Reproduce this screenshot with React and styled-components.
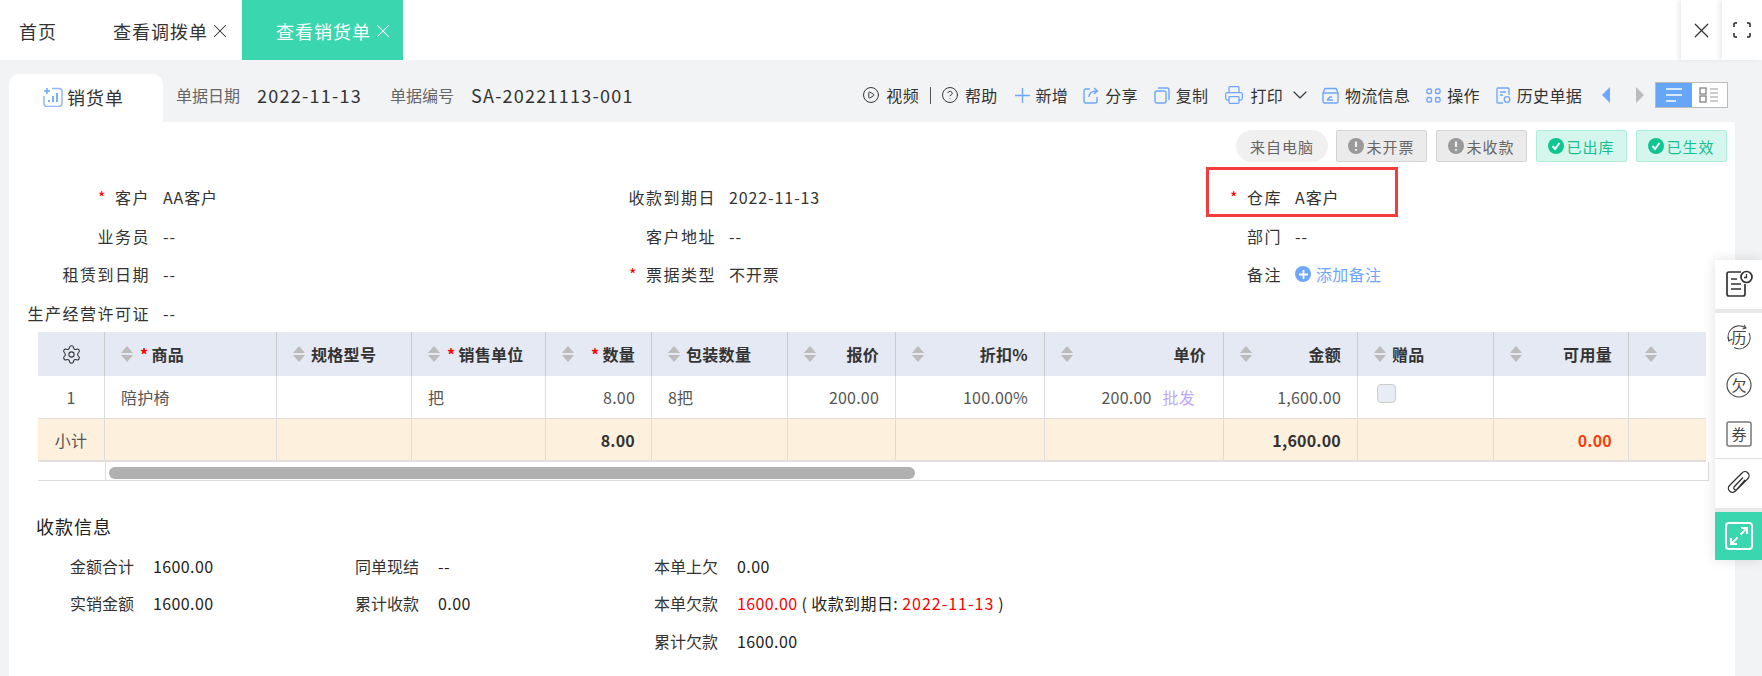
import React from "react";
import styled, { createGlobalStyle } from "styled-components";
import { CirclePlay, CircleHelp, ChevronDown, Printer, Settings, X } from "lucide-react";

const BLUE = "#6ea6fb";
const COLUMNS = "67px 172px 135px 134px 106px 136px 108px 149px 179px 134px 136px 135px 77px";

const headers = [
  { label: "商品", required: true },
  { label: "规格型号" },
  { label: "销售单位", required: true },
  { label: "数量", required: true, right: true },
  { label: "包装数量" },
  { label: "报价", right: true },
  { label: "折扣%", right: true },
  { label: "单价", right: true, inset: 17 },
  { label: "金额", right: true },
  { label: "赠品" },
  { label: "可用量", right: true },
  { label: "" },
];

const formRows = [
  [
    { label: "客户", value: "AA客户", required: true },
    { label: "收款到期日", value: "2022-11-13" },
    { label: "仓库", value: "A客户", required: true },
  ],
  [
    { label: "业务员", value: "--" },
    { label: "客户地址", value: "--" },
    { label: "部门", value: "--" },
  ],
  [
    { label: "租赁到日期", value: "--" },
    { label: "票据类型", value: "不开票", required: true },
    { label: "备注", add: true },
  ],
  [{ label: "生产经营许可证", value: "--" }],
];

const SortArrows = () => (
  <SortSvg viewBox="0 0 12 16">
    <polygon points="6,0 12,7 0,7" />
    <polygon points="0,9 12,9 6,16" />
  </SortSvg>
);

const SalesIcon = () => (
  <svg width="20" height="20" viewBox="0 0 20 20" fill="none" stroke="#93b6ff" strokeWidth="1.5">
    <path d="M9 1.5h7a3 3 0 0 1 3 3v12a3 3 0 0 1-3 3H4a3 3 0 0 1-3-3V9" />
    <path d="M4 1v6M1 4h6" stroke="#6ea6fb" />
    <path d="M6 15v-2M10 15V9M14 15V6" stroke="#6ea6fb" strokeWidth="1.8" />
  </svg>
);

const PlusIcon = ({ size = 15, color = BLUE, width = 1.4 }) => (
  <svg width={size} height={size} viewBox="0 0 15 15" fill="none" stroke={color} strokeWidth={width}>
    <path d="M7.500 0v15M0 7.500h15" />
  </svg>
);

const ShareIcon = () => (
  <svg width="16" height="17" viewBox="0 0 16 17" fill="none" stroke={BLUE} strokeWidth="1.4">
    <path d="M7 2H3a2 2 0 0 0-2 2v10a2 2 0 0 0 2 2h9a2 2 0 0 0 2-2v-4" />
    <path d="M6 10c0-4 3-6 8-6M11 1l3.500 3L11 7" />
  </svg>
);

const CopyIcon = () => (
  <svg width="16" height="17" viewBox="0 0 16 17" fill="none" stroke={BLUE} strokeWidth="1.4">
    <rect x="1" y="4" width="11" height="12" rx="2" />
    <path d="M4 1h9a2 2 0 0 1 2 2v10" />
  </svg>
);

const LogisticsIcon = () => (
  <svg width="17" height="17" viewBox="0 0 17 17" fill="none" stroke={BLUE} strokeWidth="1.4">
    <path d="M1 6l2-4.500h11L16 6v8.500a1.500 1.500 0 0 1-1.500 1.500h-12A1.500 1.500 0 0 1 1 14.500z" />
    <path d="M1 6h15M5 13l3-3h2M5 13h6" />
  </svg>
);

const OperateIcon = () => (
  <svg width="15" height="15" viewBox="0 0 15 15" fill="none" stroke={BLUE} strokeWidth="1.4">
    <rect x="1" y="1" width="4.500" height="4.500" rx="1.500" />
    <rect x="9.500" y="1" width="4.500" height="4.500" rx="1.500" />
    <rect x="1" y="9.500" width="4.500" height="4.500" rx="1.500" />
    <rect x="9.500" y="9.500" width="4.500" height="4.500" rx="1.500" />
  </svg>
);

const HistoryIcon = () => (
  <svg width="15" height="17" viewBox="0 0 15 17" fill="none" stroke={BLUE} strokeWidth="1.3">
    <path d="M7 16H2a1 1 0 0 1-1-1V2a1 1 0 0 1 1-1h10a1 1 0 0 1 1 1v6" />
    <path d="M4 5h6M4 8h3" />
    <circle cx="11" cy="12.500" r="2.800" />
  </svg>
);

const ListIcon = () => (
  <svg width="20" height="16" viewBox="0 0 20 16" fill="none" stroke="#fff" strokeWidth="1.6">
    <path d="M2 2h16M2 8h16M2 14h10" />
  </svg>
);

const CardsIcon = () => (
  <svg width="20" height="16" viewBox="0 0 20 16" fill="none" stroke="#777" strokeWidth="1.2">
    <rect x="1" y="1" width="6" height="6" />
    <rect x="1" y="9" width="6" height="6" />
    <path d="M11 2h8M11 6h8M11 10h8M11 14h8" stroke="#999" />
  </svg>
);

const WarnDot = () => (
  <svg width="16" height="16" viewBox="0 0 16 16">
    <circle cx="8" cy="8" r="8" fill="#999" />
    <path d="M8 3.500v5.500M8 11v1.800" stroke="#eee" strokeWidth="2.200" />
  </svg>
);

const CheckDot = () => (
  <svg width="16" height="16" viewBox="0 0 16 16">
    <circle cx="8" cy="8" r="8" fill="#10c690" />
    <path d="M4.500 8l2.500 3 4.500-6" fill="none" stroke="#fff" strokeWidth="2" />
  </svg>
);

const FullscreenIcon = () => (
  <svg width="18" height="16" viewBox="0 0 18 16" fill="none" stroke="#222" strokeWidth="1.500">
    <path d="M1 5V2a1 1 0 0 1 1-1h2M14 1h2a1 1 0 0 1 1 1v3M17 11v3a1 1 0 0 1-1 1h-2M4 15H2a1 1 0 0 1-1-1v-3" />
  </svg>
);

const NoteClockIcon = () => (
  <svg width="28" height="28" viewBox="0 0 28 28" fill="none" stroke="#333" strokeWidth="1.700">
    <path d="M16 2H4a2 2 0 0 0-2 2v20a2 2 0 0 0 2 2h14a2 2 0 0 0 2-2V14" />
    <path d="M6 9h6M6 14h10M6 19h10" />
    <circle cx="21.500" cy="7" r="5.500" />
    <path d="M21.500 4v3.500h-2.500" strokeWidth="1.300" />
  </svg>
);

const RoundGlyph = ({ children, arcs }) => (
  <svg width="26" height="26" viewBox="0 0 26 26" fill="none" stroke="#444" strokeWidth="1.100">
    {arcs ? (
      <>
        <path d="M3 17A11 11 0 0 1 19 3.500M23 9A11 11 0 0 1 8 23.500" />
        <path d="M2 13l1 4 3.500-2M18 1l2 3-3.500 1" />
      </>
    ) : (
      <circle cx="13" cy="13" r="12" />
    )}
    <GlyphText x="13" y="18.500">{children}</GlyphText>
  </svg>
);

const CouponIcon = () => (
  <svg width="26" height="26" viewBox="0 0 26 26" fill="none" stroke="#777" strokeWidth="1.500">
    <rect x="1" y="1" width="24" height="24" rx="2" />
    <GlyphText x="13" y="18.500">券</GlyphText>
  </svg>
);

const ClipIcon = () => (
  <svg width="26" height="26" viewBox="0 0 26 26" fill="none" stroke="#333" strokeWidth="1.300">
    <path d="M19 10L9.500 21a4 4 0 0 1-6-5.500L16 3a4 4 0 0 1 6 5.500L11 19.500a2 2 0 0 1-3-2.500l9-9.500" />
  </svg>
);

const ExpandIcon = () => (
  <svg width="28" height="28" viewBox="0 0 28 28" fill="none" stroke="#fff" strokeWidth="2">
    <rect x="1" y="1" width="26" height="26" rx="3" />
    <path d="M15.500 12.500L22 6M16 6h6v6M12.500 15.500L6 22M6 16v6h6" />
  </svg>
);

export default function App() {
  return (
    <Page>
      <GlobalStyle />
      <TabBar>
        <HomeTab>首页</HomeTab>
        <Tab>
          查看调拨单
          <X size={22} strokeWidth={1.1} />
        </Tab>
        <Tab $active>
          查看销货单
          <X size={22} strokeWidth={1.1} />
        </Tab>
        <WindowButton>
          <X size={25} strokeWidth={1.2} />
        </WindowButton>
        <WindowButton>
          <FullscreenIcon />
        </WindowButton>
      </TabBar>

      <Body>
        <SubHeader>
          <SheetTab>
            <SalesIcon />
            销货单
          </SheetTab>
          <MetaLabel>单据日期</MetaLabel>
          <MetaValue>2022-11-13</MetaValue>
          <MetaLabel>单据编号</MetaLabel>
          <MetaValue>SA-20221113-001</MetaValue>

          <Toolbar>
            <ToolItem $gap={14}>
              <CirclePlay size={18} strokeWidth={1.3} color="#333" />
              视频
            </ToolItem>
            <ToolDivider />
            <ToolItem $gap={17}>
              <CircleHelp size={18} strokeWidth={1.3} color="#333" />
              帮助
            </ToolItem>
            <ToolItem $gap={15}>
              <PlusIcon />
              新增
            </ToolItem>
            <ToolItem>
              <ShareIcon />
              分享
            </ToolItem>
            <ToolItem>
              <CopyIcon />
              复制
            </ToolItem>
            <ToolItem $gap={10}>
              <Printer size={20} strokeWidth={1.5} color={BLUE} />
              打印
              <PrintChevron size={24} strokeWidth={1.1} color="#333" />
            </ToolItem>
            <ToolItem>
              <LogisticsIcon />
              物流信息
            </ToolItem>
            <ToolItem>
              <OperateIcon />
              操作
            </ToolItem>
            <ToolItem $gap={20}>
              <HistoryIcon />
              历史单据
            </ToolItem>
            <ArrowButton $dir="left" />
            <ArrowButton $dir="right" />
            <ViewToggle>
              <ToggleHalf $active>
                <ListIcon />
              </ToggleHalf>
              <ToggleHalf>
                <CardsIcon />
              </ToggleHalf>
            </ViewToggle>
          </Toolbar>
        </SubHeader>

        <Sheet>
          <TagRow>
            <PillTag>来自电脑</PillTag>
            <Tag>
              <WarnDot />
              未开票
            </Tag>
            <Tag>
              <WarnDot />
              未收款
            </Tag>
            <Tag $green>
              <CheckDot />
              已出库
            </Tag>
            <Tag $green>
              <CheckDot />
              已生效
            </Tag>
          </TagRow>

          <FormGrid>
            {formRows.flat().map((field) => (
              <Field key={field.label}>
                <FieldLabel>
                  {field.required && <Star>*</Star>}
                  {field.label}
                </FieldLabel>
                {field.add ? (
                  <AddNote>
                    <AddDot>
                      <PlusIcon size={9} color="#fff" width={3} />
                    </AddDot>
                    添加备注
                  </AddNote>
                ) : (
                  <FieldValue>{field.value}</FieldValue>
                )}
              </Field>
            ))}
          </FormGrid>

          <Table>
            <HeadRow>
              <HeadCell $center>
                <Settings size={21} strokeWidth={1.2} color="#333" />
              </HeadCell>
              {headers.map((h, i) => (
                <HeadCell key={i} $inset={h.inset}>
                  <SortArrows />
                  <HeadLabel $right={h.right}>
                    {h.required && <HeadStar>*</HeadStar>}
                    {h.label}
                  </HeadLabel>
                </HeadCell>
              ))}
            </HeadRow>
            <DataRow>
              <Cell $center>1</Cell>
              <Cell>陪护椅</Cell>
              <Cell />
              <Cell>把</Cell>
              <Cell $right>8.00</Cell>
              <Cell>8把</Cell>
              <Cell $right>200.00</Cell>
              <Cell $right>100.00%</Cell>
              <Cell $right $inset={28}>
                200.00<PriceTag>批发</PriceTag>
              </Cell>
              <Cell $right>1,600.00</Cell>
              <Cell>
                <GiftBox />
              </Cell>
              <Cell />
              <Cell />
            </DataRow>
            <SumRow>
              <Cell $center>小计</Cell>
              <Cell />
              <Cell />
              <Cell />
              <Cell $right $bold>8.00</Cell>
              <Cell />
              <Cell />
              <Cell />
              <Cell />
              <Cell $right $bold>1,600.00</Cell>
              <Cell />
              <Cell $right $bold $red>0.00</Cell>
              <Cell />
            </SumRow>
            <ScrollRow>
              <ScrollTrack>
                <ScrollThumb />
              </ScrollTrack>
            </ScrollRow>
          </Table>

          <SectionTitle>收款信息</SectionTitle>
          <PayGrid>
            <PayColumn $width={285}>
              <PayLine><PayLabel>金额合计</PayLabel>1600.00</PayLine>
              <PayLine><PayLabel>实销金额</PayLabel>1600.00</PayLine>
            </PayColumn>
            <PayColumn $width={299}>
              <PayLine><PayLabel>同单现结</PayLabel>--</PayLine>
              <PayLine><PayLabel>累计收款</PayLabel>0.00</PayLine>
            </PayColumn>
            <PayColumn>
              <PayLine><PayLabel>本单上欠</PayLabel>0.00</PayLine>
              <PayLine>
                <PayLabel>本单欠款</PayLabel>
                <Due>1600.00</Due>&nbsp;( 收款到期日:&nbsp;<DueDate>2022-11-13</DueDate>&nbsp;)
              </PayLine>
              <PayLine><PayLabel>累计欠款</PayLabel>1600.00</PayLine>
            </PayColumn>
          </PayGrid>
        </Sheet>
      </Body>

      <Annotation />

      <SidePanel>
        <SideCard>
          <SideItem><NoteClockIcon /></SideItem>
        </SideCard>
        <SideCard>
          <SideItem><RoundGlyph arcs>历</RoundGlyph></SideItem>
          <SideItem><RoundGlyph>欠</RoundGlyph></SideItem>
          <SideItem><CouponIcon /></SideItem>
          <SideDivider />
          <SideItem><ClipIcon /></SideItem>
        </SideCard>
        <SideCard $green>
          <SideItem><ExpandIcon /></SideItem>
        </SideCard>
      </SidePanel>
    </Page>
  );
}

const GlobalStyle = createGlobalStyle`
  html, body {
    margin: 0;
    padding: 0;
    background: #fff;
  }
  * {
    box-sizing: border-box;
  }
  body {
    font-family: "Noto Sans CJK SC", "Open Sans", sans-serif;
    font-size: 16px;
    color: #333;
  }
`;

const Page = styled.div`
  position: relative;
  width: 1762px;
  height: 676px;
  overflow: hidden;
`;

const TabBar = styled.div`
  display: flex;
  align-items: stretch;
  height: 60px;
  background: #fff;
`;

const HomeTab = styled.div`
  display: flex;
  align-items: center;
  width: 79px;
  padding: 2px 0 0 19px;
  font-size: 18px;
  letter-spacing: 1px;
`;

const Tab = styled.div`
  display: flex;
  align-items: center;
  gap: 1px;
  width: 161px;
  margin-right: 2px;
  padding: 2px 0 0 34px;
  font-size: 18px;
  letter-spacing: 1px;
  color: ${(p) => (p.$active ? "#fff" : "#333")};
  background: ${(p) => (p.$active ? "#3ad6b0" : "transparent")};
`;

const WindowButton = styled.div`
  display: flex;
  align-items: center;
  justify-content: center;
  width: 40px;
  box-shadow: -3px 0 4px rgba(0, 0, 0, 0.07);
  &:nth-last-child(2) {
    margin-left: auto;
    width: 41px;
  }
`;

const Body = styled.div`
  height: 616px;
  padding: 14px 27px 0 9px;
  background: #f2f3f5;
`;

const SubHeader = styled.div`
  display: flex;
  align-items: center;
  height: 48px;
`;

const SheetTab = styled.div`
  display: flex;
  align-items: center;
  gap: 4px;
  width: 154px;
  height: 48px;
  margin-right: 13px;
  padding: 0 0 2px 34px;
  font-size: 18px;
  letter-spacing: 1px;
  background: #fff;
  border-radius: 10px 10px 0 0;
`;

const MetaLabel = styled.span`
  margin: 0 17px 6px 0;
  font-size: 16px;
  color: #666;
`;

const MetaValue = styled.span`
  margin: 0 28px 6px 0;
  font-size: 18px;
  letter-spacing: 1.25px;
  color: #333;
`;

const Toolbar = styled.div`
  display: flex;
  align-items: center;
  margin: 0 0 6px auto;
  padding-right: 7px;
`;

const ToolItem = styled.div`
  display: flex;
  align-items: center;
  gap: 6px;
  margin-right: ${(p) => p.$gap ?? 16}px;
  font-size: 16px;
  letter-spacing: 0.3px;
  white-space: nowrap;
`;

const PrintChevron = styled(ChevronDown)`
  margin-left: -1px;
`;

const ToolDivider = styled.i`
  width: 1px;
  height: 17px;
  margin: 0 10px 0 -3px;
  background: #555;
`;

const ArrowButton = styled.i`
  width: 0;
  height: 0;
  margin: ${(p) => (p.$dir === "left" ? "0 26px 0 0" : "0 11px 0 0")};
  border-top: 8px solid transparent;
  border-bottom: 8px solid transparent;
  border-right: ${(p) => (p.$dir === "left" ? `8px solid ${BLUE}` : "0")};
  border-left: ${(p) => (p.$dir === "right" ? "8px solid #bbb" : "0")};
`;

const ViewToggle = styled.div`
  display: flex;
  width: 73px;
  height: 26px;
  border: 1px solid #bbb;
`;

const ToggleHalf = styled.div`
  display: flex;
  flex: 1;
  align-items: center;
  justify-content: center;
  background: ${(p) => (p.$active ? "#66a6f7" : "#fff")};
`;

const Sheet = styled.div`
  height: 554px;
  padding-top: 8px;
  background: #fff;
`;

const TagRow = styled.div`
  display: flex;
  justify-content: flex-end;
  gap: 9px;
  padding-right: 8px;
`;

const PillTag = styled.div`
  display: flex;
  align-items: center;
  justify-content: center;
  width: 92px;
  height: 32px;
  margin-right: -1px;
  font-size: 15px;
  letter-spacing: 1px;
  color: #666;
  background: #f0f0f0;
  border-radius: 16px;
`;

const Tag = styled.div`
  display: flex;
  align-items: center;
  justify-content: center;
  gap: 2px;
  width: 91px;
  height: 32px;
  font-size: 15px;
  letter-spacing: 1px;
  border-radius: 2px;
  color: ${(p) => (p.$green ? "#14c08f" : "#666")};
  background: ${(p) => (p.$green ? "#d5f6ec" : "#ebebeb")};
  border: 1px solid ${(p) => (p.$green ? "#aeeeda" : "#d4d4d4")};
`;

const FormGrid = styled.div`
  display: grid;
  grid-template-columns: repeat(3, 566px);
  grid-auto-rows: 38.5px;
  margin-top: 16px;
`;

const Field = styled.div`
  display: flex;
  align-items: center;
  gap: 13px;
`;

const FieldLabel = styled.div`
  width: 141px;
  font-size: 16px;
  letter-spacing: 1.5px;
  text-align: right;
  white-space: nowrap;
`;

const Star = styled.span`
  margin-right: 8px;
  color: #f00;
`;

const FieldValue = styled.div`
  font-size: 16px;
  letter-spacing: 0.9px;
`;

const AddNote = styled.div`
  display: flex;
  align-items: center;
  gap: 5px;
  font-size: 16px;
  letter-spacing: 0.3px;
  color: ${BLUE};
`;

const AddDot = styled.span`
  display: flex;
  align-items: center;
  justify-content: center;
  width: 16px;
  height: 16px;
  background: ${BLUE};
  border-radius: 50%;
`;

const Table = styled.div`
  width: 1670px;
  margin-left: 29px;
`;

const HeadRow = styled.div`
  display: grid;
  grid-template-columns: ${COLUMNS};
  width: 1668px;
  height: 44px;
  background: #e5e9f4;
`;

const HeadCell = styled.div`
  display: flex;
  align-items: center;
  justify-content: ${(p) => (p.$center ? "center" : "flex-start")};
  padding: 0 ${(p) => (p.$center ? 0 : p.$inset ?? 16)}px 0 ${(p) => (p.$center ? 0 : 16)}px;
  border-right: 1px solid #ccc;
  &:last-child {
    border-right: 0;
  }
`;

const SortSvg = styled.svg`
  flex: none;
  width: 12px;
  height: 16px;
  margin-right: 6px;
  fill: #bbb;
`;

const HeadLabel = styled.div`
  display: flex;
  align-items: center;
  margin-left: ${(p) => (p.$right ? "auto" : "0")};
  font-size: 16px;
  font-weight: 700;
  letter-spacing: 0.3px;
  white-space: nowrap;
`;

const HeadStar = styled.span`
  margin: 0 3px 0 1px;
  color: #f00;
`;

const DataRow = styled.div`
  display: grid;
  grid-template-columns: ${COLUMNS};
  width: 1668px;
  height: 43px;
  border-bottom: 1px solid #ddd;
`;

const SumRow = styled(DataRow)`
  background: #fdf0dc;
  border-bottom-width: 2px;
  border-bottom-color: #e2dedb;
`;

const Cell = styled.div`
  display: flex;
  align-items: center;
  justify-content: ${(p) => (p.$center ? "center" : p.$right ? "flex-end" : "flex-start")};
  padding: 0 ${(p) => p.$inset ?? 16}px;
  font-size: 16px;
  font-weight: ${(p) => (p.$bold ? 700 : 400)};
  letter-spacing: 0.2px;
  color: ${(p) => (p.$red ? "#fa3c0a" : p.$bold ? "#333" : "#555")};
  border-right: 1px solid #ddd;
  white-space: nowrap;
  &:last-child {
    border-right: 0;
  }
`;

const PriceTag = styled.span`
  margin-left: 11px;
  color: #c0a9f3;
`;

const GiftBox = styled.i`
  width: 19px;
  height: 19px;
  margin: -8px 0 0 3px;
  background: #e8ecf5;
  border: 1px solid #ccc;
  border-radius: 4px;
`;

const ScrollRow = styled.div`
  display: flex;
  height: 19px;
  margin-right: -1px;
  padding-left: 67px;
  border-bottom: 1px solid #ddd;
  border-right: 1px solid #ddd;
`;

const ScrollTrack = styled.div`
  flex: 1;
  padding: 5px 0 0 3px;
  border-left: 1px solid #ddd;
`;

const ScrollThumb = styled.div`
  width: 806px;
  height: 12px;
  background: #b0b0b0;
  border-radius: 6px;
`;

const SectionTitle = styled.div`
  margin: 32px 0 8px 27px;
  font-size: 18px;
  line-height: 26px;
  letter-spacing: 1px;
  color: #222;
`;

const PayGrid = styled.div`
  display: flex;
  padding-left: 61px;
`;

const PayColumn = styled.div`
  width: ${(p) => (p.$width ? `${p.$width}px` : "auto")};
`;

const PayLine = styled.div`
  display: flex;
  align-items: center;
  height: 37.5px;
  font-size: 16px;
  letter-spacing: 0.4px;
  color: #222;
  white-space: nowrap;
`;

const PayLabel = styled.span`
  width: 83px;
  letter-spacing: 0;
  color: #333;
`;

const Due = styled.span`
  color: #f00;
`;

const DueDate = styled(Due)`
  letter-spacing: 1px;
`;

const Annotation = styled.div`
  position: absolute;
  left: 1206px;
  top: 167px;
  width: 192px;
  height: 50px;
  border: 3px solid #f43c3c;
`;

const SidePanel = styled.div`
  position: absolute;
  top: 260px;
  right: 0;
  display: flex;
  flex-direction: column;
  gap: 4px;
  width: 47px;
  background: #e8e8e8;
  box-shadow: 0 0 12px rgba(0, 0, 0, 0.12);
`;

const SideCard = styled.div`
  background: ${(p) => (p.$green ? "#3ad6b0" : "#fff")};
`;

const SideItem = styled.div`
  display: flex;
  align-items: center;
  justify-content: center;
  height: 48.5px;
`;

const SideDivider = styled.div`
  height: 1px;
  background: #ddd;
`;

const GlyphText = styled.text`
  font-size: 15px;
  fill: #444;
  stroke: none;
  text-anchor: middle;
`;
